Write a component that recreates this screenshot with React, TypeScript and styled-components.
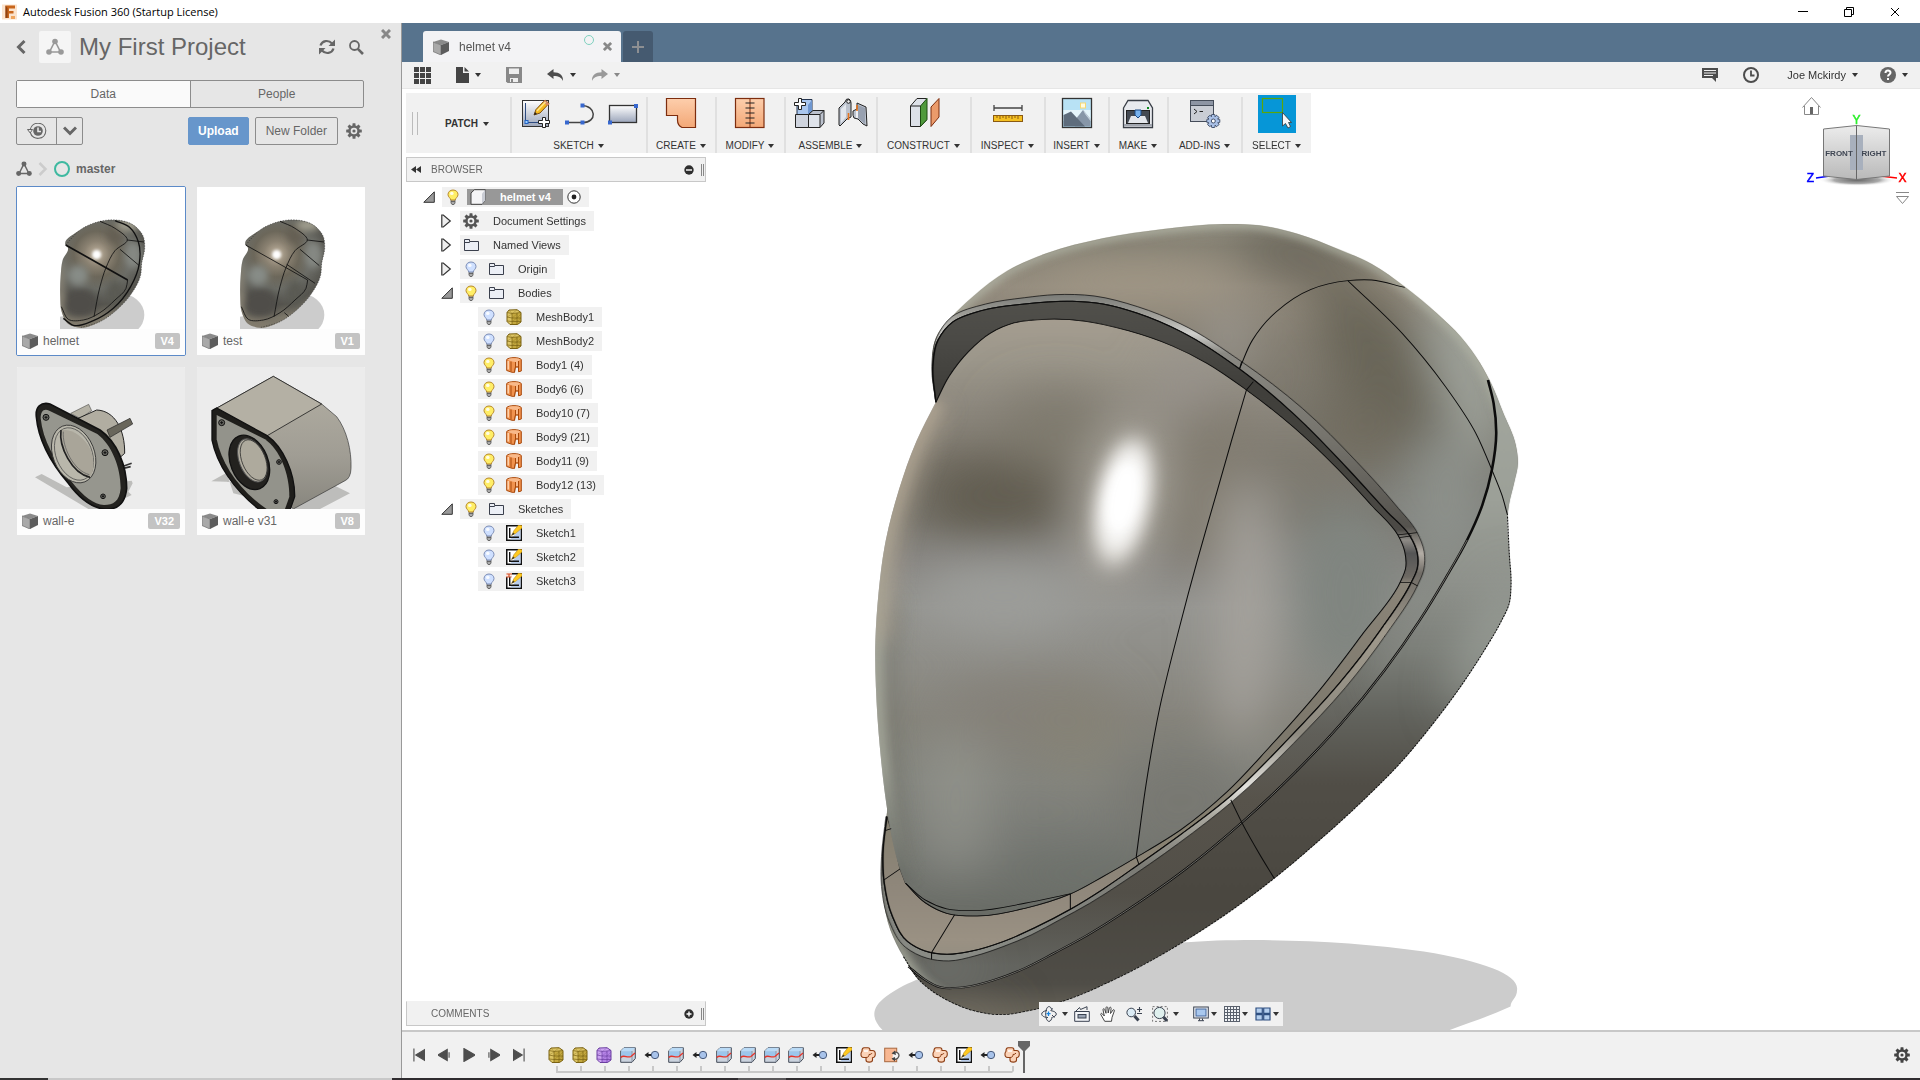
import React from "react";
import styled, { createGlobalStyle, css } from "styled-components";

const sans = `"Liberation Sans", Arial, sans-serif`;

const GlobalStyle = createGlobalStyle`
  *, *::before, *::after { box-sizing: border-box; }
  html, body { margin: 0; height: 100%; }
  body { font-family: ${sans}; font-size: 12px; color: #333; background: #fff; overflow: hidden; }
  button { font: inherit; color: inherit; background: none; border: 0; padding: 0; cursor: default; }
  ul, ol { list-style: none; margin: 0; padding: 0; }
  h1 { margin: 0; }
  svg { display: block; flex: none; }
`;

/* ---------- geometry helpers ---------- */

type Pt = [number, number];

const dist = (a: Pt, b: Pt) => Math.hypot(a[0] - b[0], a[1] - b[1]) || 1;

/* Smooth path through points; tangents are weighted by segment length. */
function curve(points: Pt[], closed = false, start = true): string {
  const n = points.length;
  const at = (i: number): Pt =>
    closed ? points[(i + n) % n] : points[Math.max(0, Math.min(n - 1, i))];
  const slope = (i: number): Pt => {
    const a = at(i - 1), b = at(i), c = at(i + 1);
    if (!closed && i === 0) return [(c[0] - b[0]) / dist(b, c), (c[1] - b[1]) / dist(b, c)];
    if (!closed && i === n - 1) return [(b[0] - a[0]) / dist(a, b), (b[1] - a[1]) / dist(a, b)];
    const u = dist(a, b), v = dist(b, c);
    return [0, 1].map((k) => (((b[k] - a[k]) / u) * v + ((c[k] - b[k]) / v) * u) / (u + v)) as Pt;
  };
  let d = start ? `M${points[0][0]} ${points[0][1]}` : "";
  const last = closed ? n : n - 1;
  for (let i = 0; i < last; i++) {
    const b = at(i), c = at(i + 1), s = slope(i), t = slope(closed ? (i + 1) % n : i + 1), l = dist(b, c) / 3;
    d += `C${(b[0] + s[0] * l).toFixed(1)} ${(b[1] + s[1] * l).toFixed(1)} ${(c[0] - t[0] * l).toFixed(1)} ${(c[1] - t[1] * l).toFixed(1)} ${c[0]} ${c[1]}`;
  }
  return closed ? d + "Z" : d;
}

function between(a: Pt[], b: Pt[]): string {
  const back = [...b].reverse();
  return curve(a) + `L${back[0][0]} ${back[0][1]}` + curve(back, false, false) + "Z";
}

/* ---------- shell ---------- */

const Window = styled.div`
  display: flex;
  flex-direction: column;
  height: 100vh;
  min-width: 1200px;
`;

const TitleBar = styled.header`
  display: flex;
  align-items: center;
  height: 23px;
  padding: 0 2px;
  background: #fff;
  color: #000;
  font-family: "Open Sans", "Noto Sans", sans-serif;
  font-size: 11px;
`;

const TitleText = styled.span`
  flex: 1;
  margin-left: 6px;
`;

const WindowButton = styled.button`
  display: grid;
  place-items: center;
  width: 46px;
  height: 23px;
`;

const Main = styled.div`
  display: flex;
  flex: 1;
  min-height: 0;
`;

const Taskbar = styled.footer`
  height: 2px;
  background: linear-gradient(to right, #333 48px, #c8c8c8 48px, #c8c8c8 392px, #2f2c2f 392px, #2f2c2f 738px, #5a585a 738px, #5a585a 786px, #2f2c2f 786px);
`;

/* ---------- data panel ---------- */

const Panel = styled.aside`
  display: flex;
  align-items: flex-start;
  width: 402px;
  padding: 0 0 0 16px;
  background: #e6e6e6;
  border-right: 1px solid #999;
  color: #666;
`;

const PanelBody = styled.div`
  width: 350px;
`;

const PanelClose = styled.button`
  margin: 6px 0 0 15px;
`;

const PanelHeader = styled.div`
  display: flex;
  align-items: center;
  width: 348px;
  margin-top: 8px;
`;

const ProjectBadge = styled.span`
  display: grid;
  place-items: center;
  width: 32px;
  height: 32px;
  margin: 0 8px 0 13px;
  border-radius: 2px;
  background: #f5f5f5;
`;

const ProjectTitle = styled.h1`
  flex: 1;
  font-size: 24px;
  font-weight: 400;
  line-height: 32px;
`;

const HeaderButton = styled.button`
  margin-left: 14px;
`;

const TabSwitch = styled.div`
  display: flex;
  width: 348px;
  height: 28px;
  margin-top: 17px;
  border: 1px solid #8c8c8c;
  border-radius: 2px;
`;

const SwitchTab = styled.button<{ $active?: boolean }>`
  flex: 1;
  background: ${(p) => (p.$active ? "#fafafa" : "transparent")};
  & + & { border-left: 1px solid #8c8c8c; }
`;

const Actions = styled.div`
  display: flex;
  align-items: center;
  width: 348px;
  height: 28px;
  margin-top: 9px;
`;

const SplitButton = styled.div`
  display: flex;
  height: 28px;
  margin-right: auto;
  border: 1px solid #8c8c8c;
  border-radius: 2px;
`;

const SplitPart = styled.button<{ $width: number }>`
  display: grid;
  place-items: center;
  width: ${(p) => p.$width}px;
  & + & { border-left: 1px solid #8c8c8c; }
`;

const PanelButton = styled.button<{ $primary?: boolean }>`
  height: 28px;
  padding: 0 10px;
  margin-right: 6px;
  border: 1px solid #8c8c8c;
  border-radius: 2px;
  ${(p) =>
    p.$primary &&
    css`
      padding: 0 9px;
      border-color: #6796cb;
      background: #6796cb;
      color: #fff;
      font-weight: 700;
    `}
`;

const SettingsButton = styled.button`
  margin: 0 2px 0 2px;
`;

const Breadcrumb = styled.nav`
  display: flex;
  align-items: center;
  gap: 6px;
  height: 16px;
  margin-top: 16px;
  font-weight: 700;
`;

const CardGrid = styled.ul`
  display: grid;
  grid-template-columns: 170px 170px;
  gap: 10px;
  margin-top: 9px;
`;

const Card = styled.li<{ $selected?: boolean }>`
  display: flex;
  flex-direction: column;
  height: 170px;
  border: 1px solid ${(p) => (p.$selected ? "#5c8ac8" : "transparent")};
  border-radius: 2px;
  background: #fff;
  background-clip: padding-box;
  overflow: hidden;
`;

const Thumb = styled.div<{ $tint: string }>`
  height: 142px;
  background: ${(p) => p.$tint};
  overflow: hidden;
`;

const CardFooter = styled.div`
  display: flex;
  align-items: center;
  flex: 1;
  padding: 0 5px 2px;
  background: #fdfdfd;
`;

const CardName = styled.span`
  flex: 1;
  margin-left: 5px;
`;

const Version = styled.span`
  padding: 0 6px;
  border-radius: 2px;
  background: #c3c3c3;
  color: #fff;
  font-size: 11px;
  font-weight: 700;
  line-height: 16px;
`;

/* ---------- workspace ---------- */

const Workspace = styled.section`
  display: flex;
  flex: 1;
  flex-direction: column;
  min-width: 0;
`;

const TabBar = styled.div`
  display: flex;
  align-items: flex-end;
  gap: 2px;
  height: 39px;
  padding-left: 21px;
  background: #57738d;
`;

const DocumentTab = styled.div`
  display: flex;
  align-items: center;
  width: 198px;
  height: 31px;
  padding: 0 9px 0 10px;
  border-radius: 3px 3px 0 0;
  background: #f3f3f5;
  color: #555;
`;

const DocumentName = styled.span`
  flex: 1;
  margin-left: 10px;
`;

const SyncMark = styled.span`
  align-self: flex-start;
  margin: 4px 9px 0 0;
`;

const NewTab = styled.button`
  display: grid;
  place-items: center;
  width: 30px;
  height: 31px;
  border-radius: 3px 3px 0 0;
  background: #455a70;
`;

const QuickBar = styled.div`
  display: flex;
  align-items: center;
  height: 27px;
  padding: 0 12px;
  background: #f1f1f1;
  border-bottom: 1px solid #e6e6e6;
  font-size: 11px;
`;

const QuickButton = styled.button<{ $gap?: number }>`
  display: flex;
  align-items: center;
  gap: 6px;
  margin-right: ${(p) => p.$gap ?? 0}px;
`;

const Spacer = styled.span`
  flex: 1;
`;

const CaretMark = styled.i<{ $faded?: boolean }>`
  width: 0;
  height: 0;
  border: 3px solid transparent;
  border-top: 4px solid ${(p) => (p.$faded ? "#888" : "#333")};
  border-bottom: 0;
`;

const Viewport = styled.div`
  position: relative;
  display: flex;
  flex: 1;
  flex-direction: column;
  align-items: flex-start;
  min-height: 0;
  padding: 4px;
`;

const ModelLayer = styled.div`
  position: absolute;
  inset: 0;
  z-index: -1;
  svg { width: 100%; height: 100%; }
`;

const CubeLayer = styled.div`
  position: absolute;
  top: 3px;
  right: 5px;
`;

const Ribbon = styled.div`
  display: flex;
  height: 60px;
  padding: 4px 0 0;
  background: #f1f1f1;
  font-size: 10px;
`;

const Grip = styled.i`
  width: 6px;
  height: 23px;
  margin: 0 27px 0 6px;
  border: solid #bbb;
  border-width: 0 1px;
`;

const WorkspacePicker = styled.button`
  display: flex;
  align-items: center;
  width: 104px;
  padding-bottom: 3px;
  font-weight: 700;
`;

const RibbonGroup = styled.div<{ $width: number }>`
  display: flex;
  flex-direction: column;
  align-items: center;
  justify-content: space-between;
  width: ${(p) => p.$width}px;
  padding-right: 1px;
  border-left: 2px solid #e0e0e0;
`;

const RibbonIcons = styled.div`
  display: flex;
  gap: 12px;
  height: 32px;
`;

const RibbonTool = styled.button<{ $active?: boolean }>`
  display: grid;
  place-items: center;
  width: ${(p) => (p.$active ? 38 : 32)}px;
  height: ${(p) => (p.$active ? 38 : 32)}px;
  margin-top: ${(p) => (p.$active ? -2 : 0)}px;
  background: ${(p) => (p.$active ? "#0696d7" : "transparent")};
`;

const MenuLabel = styled.button`
  display: flex;
  align-items: center;
  gap: 4px;
  line-height: 14px;
`;

const MenuText = styled.span<{ $space?: number }>`
  margin-right: ${(p) => p.$space ?? 0}px;
`;

const PaletteBar = styled.div<{ $indent?: boolean }>`
  display: flex;
  align-items: center;
  width: 300px;
  height: 25px;
  padding: 0 1px 0 ${(p) => (p.$indent ? 24 : 4)}px;
  border: 1px solid #c8c8c8;
  background: #f1f1f1;
  color: #666;
  font-size: 10px;
`;

const BrowserBar = styled(PaletteBar)`
  margin-top: 4px;
`;

const CommentsBar = styled(PaletteBar)`
  border-top-color: #f1f1f1;
`;

const PaletteTitle = styled.span`
  flex: 1;
`;

const PaletteEdge = styled.i`
  width: 3px;
  height: 12px;
  margin-left: 7px;
  border: solid #888;
  border-width: 0 1px;
`;

const CollapseButton = styled.button`
  margin-right: 10px;
`;

const Tree = styled.ul`
  flex: 1;
  padding: 5px 0 0 14px;
  font-size: 11px;
`;

const TreeRow = styled.li<{ $level: number }>`
  display: flex;
  align-items: center;
  height: 20px;
  margin-bottom: 4px;
  padding-left: ${(p) => p.$level * 18}px;
`;

const TreeToggle = styled.button`
  width: 22px;
  padding-left: 3px;
`;

const NodeChip = styled.div`
  display: flex;
  align-items: center;
  height: 20px;
  padding: 0 8px 0 3px;
  background: #f1f1f1;
`;

const BulbSlot = styled.button<{ $root?: boolean }>`
  display: grid;
  place-items: center;
  width: 15px;
  margin-right: ${(p) => (p.$root ? 7 : 10)}px;
`;

const NodeText = styled.span`
  margin-left: 14px;
`;

const RootName = styled.span`
  display: flex;
  align-items: center;
  height: 16px;
  margin-right: 4px;
  padding: 0 12px 0 3px;
  background: #989898;
  color: #fff;
  font-weight: 700;
`;

const ViewportBottom = styled.div`
  display: grid;
  grid-template-columns: 1fr auto 1fr;
  align-items: center;
  width: 100%;
`;

const NavBar = styled.div`
  display: flex;
  align-items: center;
  height: 24px;
  padding: 0 4px 0 2px;
  background: #f1f1f1;
`;

const NavTool = styled.button<{ $gap: number; $inner?: number }>`
  display: flex;
  align-items: center;
  gap: ${(p) => p.$inner ?? 2}px;
  margin-right: ${(p) => p.$gap}px;
`;

const Timeline = styled.div`
  display: flex;
  height: 48px;
  padding: 0 10px 0 11px;
  border-top: 2px solid #c8c8c8;
  background: #f1f1f1;
`;

const Playback = styled.div`
  display: flex;
  align-items: center;
  gap: 13px;
  width: 131px;
`;

const Feature = styled.li`
  width: 24px;
  padding-top: 15px;
`;

const FeatureButton = styled.button`
  display: grid;
  place-items: center;
  width: 24px;
  height: 16px;
`;

const Features = styled.ol`
  display: flex;
  margin-right: -6px;
`;

const TickLeft = styled.i`
  display: block;
  height: 7px;
  border: solid #c8c8c8;
  border-width: 0 0 2px;
`;

const TickRight = styled(TickLeft)`
  border-width: 0 0 2px 2px;
`;

const TickRow = styled.div`
  display: grid;
  grid-template-columns: 12px 12px;
  height: 7px;
  margin-top: 3px;
  ${Feature}:first-child & ${TickLeft}:first-child { border-color: transparent; }
  ${Feature}:last-child & ${TickRight} { border-bottom-color: transparent; }
`;

const TimelineEnd = styled.div`
  flex: 1;
  padding-top: 9px;
`;

const TimelineSettings = styled.button`
  align-self: center;
`;

/* ---------- icons ---------- */

const Caret = ({ faded }: { faded?: boolean }) => <CaretMark $faded={faded} />;

const Gear = ({ size = 16, color = "#666", hole = "#e6e6e6" }) => (
  <svg width={size} height={size} viewBox="0 0 16 16">
    <g fill={color}>
      {[0, 45, 90, 135].map((a) => (
        <rect key={a} x="6.5" y="0.2" width="3" height="15.6" rx="0.5" transform={`rotate(${a} 8 8)`} />
      ))}
      <circle cx="8" cy="8" r="5.8" />
    </g>
    <circle cx="8" cy="8" r="3.3" fill={hole} />
    <circle cx="8" cy="8" r="1.6" fill={color} />
  </svg>
);

const Cross = ({ size = 10, color = "#888", width = 3 }) => (
  <svg width={size} height={size} viewBox="0 0 10 10">
    <path d="M1 1L9 9M9 1L1 9" stroke={color} strokeWidth={width} />
  </svg>
);

const ProjectIcon = ({ size = 18, color = "#999" }) => (
  <svg width={size} height={size} viewBox="0 0 18 18">
    <path d="M9 3L3.5 14H14.5Z" fill="none" stroke={color} strokeWidth="1.6" />
    <g fill={color}>
      <circle cx="9" cy="3.5" r="2.8" />
      <circle cx="3" cy="14" r="2.8" />
      <circle cx="15" cy="14" r="2.8" />
    </g>
  </svg>
);

const Cube = () => (
  <svg width="16" height="16" viewBox="0 0 16 16">
    <path d="M0 3L8 0.5L16 3L8 6Z" fill="#8a8a8a" />
    <path d="M0 3L8 6V16L0 12.5Z" fill="#a9a9a9" stroke="#777" strokeWidth="0.8" />
    <path d="M8 6L16 3V12L8 16Z" fill="#5c5c5c" />
  </svg>
);

const Ring = ({ size = 16, color = "#3eb9a0", width = 2 }) => (
  <svg width={size} height={size} viewBox={`0 0 ${size} ${size}`}>
    <circle cx={size / 2} cy={size / 2} r={size / 2 - width / 2} fill="none" stroke={color} strokeWidth={width} />
  </svg>
);

const Bulb = ({ on }: { on?: boolean }) => (
  <svg width="12" height="16" viewBox="0 0 12 16">
    <path d="M4 10.5L4 14L5 15.5H7L8 14V10.5Z" fill="#aaa" stroke="#555" strokeWidth="0.8" />
    <path d="M4 12.5H8" stroke="#555" strokeWidth="0.8" />
    <path
      d="M6 1C3 1 1 3 1 5.6C1 8 3.4 8.8 3.8 11H8.2C8.6 8.8 11 8 11 5.6C11 3 9 1 6 1Z"
      fill={on ? "#ffee66" : "#cfe0ff"}
      stroke={on ? "#b8892b" : "#7c8db5"}
    />
    <ellipse cx="4.8" cy="4.4" rx="1.8" ry="1.6" fill="#fff" opacity="0.85" />
  </svg>
);

const Folder = () => (
  <svg width="16" height="16" viewBox="0 0 16 16">
    <path d="M1.5 13.5V2.5H6.5V4.5H15.5V13.5Z" fill="#eceff6" stroke="#3a3f4c" strokeLinejoin="round" />
    <path d="M2 5.5H6.5L7.5 4.5" stroke="#3a3f4c" fill="none" />
  </svg>
);

const DocCube = () => (
  <svg width="16" height="16" viewBox="0 0 16 16">
    <path d="M1 4L4.5 0.7H15.3V11.5L12 15.3H1Z" fill="#f4f4f6" stroke="#444" />
    <path d="M12 15V4.5L15.3 1V11.5Z" fill="#c9ccd4" />
  </svg>
);

const Mesh = ({ purple }: { purple?: boolean }) => {
  const line = purple ? "#6b3fa0" : "#7a6213";
  const fill = purple ? "#cda4f2" : "#dcc464";
  return (
    <svg width="16" height="16" viewBox="0 0 16 16">
      <path d="M3 1L11 0.7L15 3.5V13L11.5 15.5H4L1 12.5V3.5Z" fill={fill} />
      <path d="M6 4.5L15 3.5V13L11.5 15.5H6Z" fill={purple ? "#b583e6" : "#c4a83e"} />
      <path
        d="M1 3.5L6 4.5L15 3.5M6 4.5V15.5M11 4V15.5M1 8L6 9H15M1 12L6 12.5H15"
        fill="none"
        stroke={line}
        strokeWidth="0.7"
      />
      <path d="M1 8L6 5M6 9L11 5M11 9L15 5M6 12.5L11 9M11 12.5L15 9M3 1L6 4.5L11 1" fill="none" stroke={line} strokeWidth="0.5" opacity="0.6" />
      <path d="M3 1L11 0.7L15 3.5V13L11.5 15.5H4L1 12.5V3.5Z" fill="none" stroke={line} />
    </svg>
  );
};

const Surface = () => (
  <svg width="16" height="16" viewBox="0 0 16 16">
    <path d="M0.7 2.5C3 0 13 0 15.3 2.5V14L12.5 14.8V10H9.5L8.5 15.3H6L0.7 13.5Z" fill="#f0934f" stroke="#a9480a" />
    <path d="M1.5 2.7C4 0.8 12 0.8 14.5 2.7L12.5 4V9.5H9.5V5L6 4.5Z" fill="#f8b98a" />
    <path d="M9.5 10.5H12.5V15.5H9Z" fill="#f1f1f1" />
    <path d="M5 4.5V14.5M9.5 5V10H12.5V4M12.5 10V14.8M9.5 10L8.5 15.3" fill="none" stroke="#a9480a" />
    <path d="M2.2 4V12.5" stroke="#ffd7b5" strokeWidth="1.4" />
  </svg>
);

const SketchIcon = ({ pinned }: { pinned?: boolean }) => (
  <svg width="16" height="16" viewBox="0 0 16 16">
    <rect x="0.75" y="0.75" width="14.5" height="14.5" fill="#fff" stroke="#111" strokeWidth="1.5" />
    <path d="M14.5 4V14.5H4Z" fill="#b9cdec" />
    <path d="M3.7 3V12.3H13" fill="none" stroke="#111" strokeWidth="1.4" />
    <path d="M5.5 10.5L8 5.5L12.5 0L16 0.5V3L9.5 8.5Z" fill="#ffc91f" stroke="#a07614" strokeWidth="0.5" />
    <path d="M5.5 10.5L7.2 7.5L8.7 8.9Z" fill="#333" />
    {pinned && <path d="M0 0H6V4H0Z" fill="#fbe8e0" />}
    {pinned && <path d="M0.5 1H6M3 1V3.5M0 4H5.5" stroke="#d4502a" strokeWidth="1.2" />}
  </svg>
);

const BoxSplit = () => (
  <svg width="16" height="16" viewBox="0 0 16 16">
    <path d="M0.7 4L4 0.7H15.3V11.5L12 15.3H0.7Z" fill="#cbd3de" stroke="#444c59" />
    <path d="M0.7 4L4 0.7H15.3L12 4Z" fill="#b9daf6" />
    <path d="M1.2 4.3H11.7V9L1.2 10Z" fill="#9cc6ec" />
    <path d="M12 4V15" stroke="#7c8696" strokeWidth="0.8" />
    <path d="M0.7 10.5C4 7 7 11.5 11 9.5L15 6" fill="none" stroke="#e5342a" strokeWidth="1.3" />
  </svg>
);

const MoveIcon = () => (
  <svg width="16" height="16" viewBox="0 0 16 16">
    <circle cx="11" cy="8" r="3.7" fill="#a8c3ea" stroke="#47597a" />
    <path d="M0.5 8L4.5 5V7H7V9H4.5V11Z" fill="#222" />
  </svg>
);

const PatchBlob = () => (
  <svg width="16" height="16" viewBox="0 0 16 16">
    <path d="M4 0.8H8C9.5 0.8 10 2 10 3.5H12.5C14.8 3.5 15.3 5 15.3 7C15.3 9.5 14.8 10.5 12.5 10.7V13C12.5 15.8 6 15.8 6 13V10.5H4C1.5 10.5 0.8 9 1 6.5C1.2 5 2 5 2 4C2 2 2.3 0.8 4 0.8Z" fill="#fbd3b8" stroke="#8d3e14" strokeWidth="1.1" />
    <path d="M6 10.5C8 10.5 9 9.5 9 7.5C10.5 7.5 11.5 7 12 6" fill="none" stroke="#8d3e14" />
    <path d="M4 4H8" stroke="#fff" strokeWidth="1.5" />
  </svg>
);

const PatchTurn = () => (
  <svg width="16" height="16" viewBox="0 0 16 16">
    <rect x="0.7" y="1.2" width="12" height="13.5" fill="#f8b791" stroke="#a9683f" />
    <path d="M9 6C13 3.5 16 7 14.5 10C13.5 12.5 10 13 8.5 11.5" fill="#f1f1f1" stroke="#555" strokeWidth="1.3" />
    <path d="M11 3.5L7.5 6.5L12 8ZM11 10L7.5 11.5L11 14.5Z" fill="#444" />
  </svg>
);

const Expander = ({ open }: { open?: boolean }) =>
  open ? (
    <svg width="12" height="12" viewBox="0 0 12 12">
      <path d="M0.8 11.3H11.3V0.8Z" fill="#999" stroke="#333" />
    </svg>
  ) : (
    <svg width="12" height="14" viewBox="0 0 12 14">
      <path d="M0.8 1H2.3L9.3 7L2.3 13H0.8Z" fill="#eee" stroke="#333" strokeWidth="1.2" />
    </svg>
  );

const RoundSign = ({ plus }: { plus?: boolean }) => (
  <svg width="10" height="10" viewBox="0 0 10 10">
    <circle cx="5" cy="5" r="4.7" fill="#2e2e2e" />
    <path d={plus ? "M2.5 5H7.5M5 2.5V7.5" : "M2 5H8"} stroke="#fff" strokeWidth="1.4" />
  </svg>
);

const metal = (
  <linearGradient id="steel" x1="0" y1="0" x2="0" y2="1">
    <stop offset="0" stopColor="#fff" />
    <stop offset="1" stopColor="#9ba5ba" />
  </linearGradient>
);

const Tool = ({ children }: { children: React.ReactNode }) => (
  <svg width="32" height="32" viewBox="0 0 32 32" fill="none">
    {children}
  </svg>
);

const ribbonIcons: Record<string, React.ReactNode> = {
  newSketch: (
    <Tool>
      <defs>{metal}</defs>
      <rect x="3.5" y="3.5" width="26" height="26" fill="url(#steel)" stroke="#333" />
      <path d="M6.5 6V25.5H23" stroke="#2c4a80" />
      <rect x="6" y="23.5" width="3" height="3" fill="#9ad0ff" stroke="#1f61c4" />
      <path d="M15 18L17 12.5L26 3L30 6.5L21 16Z" fill="#f6b91e" stroke="#7c4d10" />
      <path d="M25 4L29.5 8" stroke="#d28b6a" strokeWidth="3" />
      <path d="M18 14L26.5 5" stroke="#ffe68a" strokeWidth="1.5" />
      <path d="M15 18L16 15L18 17Z" fill="#222" />
      <path d="M23.5 20.5H26.5V23.5H30.5V26.5H26.5V30.5H23.5V26.5H19.5V23.5H23.5Z" fill="#fff" stroke="#222" />
    </Tool>
  ),
  line: (
    <Tool>
      <path d="M3.500 25.5H20C34 25.5 34 8.5 18 8.5" stroke="#444" strokeWidth="1.5" />
      <g fill="#3868cf">
        <rect x="2" y="23.5" width="4" height="4" />
        <rect x="17.500" y="23.5" width="4" height="4" />
        <rect x="17.500" y="6.5" width="4" height="4" />
      </g>
    </Tool>
  ),
  rect: (
    <Tool>
      <rect x="2.5" y="8.5" width="27" height="17" fill="url(#steel)" stroke="#333" strokeWidth="1.3" />
      <rect x="1" y="23.5" width="4" height="4" fill="#3868cf" />
      <rect x="27" y="7" width="4" height="4" fill="#3868cf" />
    </Tool>
  ),
  patch: (
    <Tool>
      <defs>
        <linearGradient id="orange" x1="0" y1="0" x2="0" y2="1">
          <stop offset="0" stopColor="#fdceac" />
          <stop offset="1" stopColor="#f3a877" />
        </linearGradient>
      </defs>
      <path d="M1.5 1.5H30.5V30.5H17Q12.5 28.5 12.5 23V18.5H1.5Z" fill="url(#orange)" stroke="#7d2d0e" strokeWidth="1.2" />
    </Tool>
  ),
  stitch: (
    <Tool>
      <rect x="1.5" y="1.5" width="28.5" height="29" fill="url(#orange)" stroke="#7d2d0e" strokeWidth="1.2" />
      <path d="M16 2V30" stroke="#7d2d0e" />
      <path d="M11.5 6H20.5M11.5 11H20.5M11.5 16H20.5M11.5 21H20.5M11.5 26H20.5" stroke="#222" strokeWidth="1.2" />
    </Tool>
  ),
  component: (
    <Tool>
      <path d="M4 8L9 2.5H19V14L15 18H4Z" fill="#a9c6ee" stroke="#24344f" />
      <path d="M15 8L19 3V14L15 18Z" fill="#6f97d0" />
      <path d="M2.5 17.5H15.5V30.5H2.5Z" fill="#cfd4de" stroke="#222" />
      <path d="M15.5 17.5L20 13.5H31V26L27 30.5H15.5Z" fill="#bcc2ce" stroke="#222" />
      <path d="M15.5 17.5H27V30.5H15.5ZM27 17.5L31 13.5" fill="#dfe3ea" stroke="#222" />
      <path d="M5.5 1.5H8.5V5.5H12.5V8.5H8.5V12.5H5.5V8.5H1.5V5.5H5.5Z" fill="#fff" stroke="#222" />
    </Tool>
  ),
  joint: (
    <Tool>
      <path d="M2 11L8 5Q9 1 12 2Q14 3 14 6V20L10 22L3 29L2 28Z" fill="#bcc3ce" stroke="#222" />
      <path d="M4 12L9 7V20L4 26Z" fill="#e3e7ed" />
      <path d="M20 6L29 10L30 29L26 27L21 22L17 21Q15.5 19 16 14L20 12Z" fill="#bcc3ce" stroke="#222" />
      <path d="M21 8L21 21L28 27V11Z" fill="#98a1b0" />
      <path d="M20 13V21" stroke="#eef0f4" strokeWidth="2" />
      <circle cx="11.5" cy="4.5" r="1.8" fill="#eee" stroke="#222" />
      <path d="M11.5 16V23M20 8V14" stroke="#e8741c" strokeWidth="1.6" />
    </Tool>
  ),
  plane: (
    <Tool>
      <path d="M2.5 9L9 1.5H18.5V23L12.5 29.5H2.5Z" fill="#dde1e8" stroke="#222" />
      <path d="M12.5 9L19 1.5V22.5L12.5 29.5Z" fill="#4f9a3c" stroke="#1d4d12" />
      <path d="M2.5 9H12.5" stroke="#222" />
      <path d="M23 10L31 1.5V20L23 29.5Z" fill="#eb9b6b" stroke="#7d2d0e" />
    </Tool>
  ),
  measure: (
    <Tool>
      <path d="M2 11H30M2 8V14M30 8V14" stroke="#444" strokeWidth="1.3" />
      <rect x="1.5" y="18.5" width="29" height="6" fill="#f4c022" stroke="#8b5a12" />
      <path d="M5 19V21M8 19V22M11 19V21M14 19V22M17 19V21M20 19V22M23 19V21M26 19V22" stroke="#8b5a12" />
    </Tool>
  ),
  picture: (
    <Tool>
      <rect x="1.5" y="1.5" width="29" height="29" fill="#b8e2f5" stroke="#333" strokeWidth="1.3" />
      <path d="M2.5 13H29.5V24H2.5Z" fill="#e4f4fb" />
      <rect x="19.5" y="6" width="5" height="5" fill="#fffbe0" stroke="#f6d873" />
      <path d="M14 23L22 13L29.5 22V29.5H14Z" fill="#8796a8" />
      <path d="M2.5 18L10 14.5L24 29.5H2.5Z" fill="#5e6c7c" />
      <path d="M22 13L24 17L29.5 24V22Z" fill="#c7d3df" />
    </Tool>
  ),
  printer: (
    <Tool>
      <path d="M1.5 11L6 3.5H26L30.5 11V30.5H1.5Z" fill="#e8eaee" stroke="#3a3f47" strokeWidth="1.3" />
      <rect x="4.5" y="13.5" width="23" height="13" fill="#444a53" stroke="#222" />
      <path d="M9 19H23L26 26H6Z" fill="#e4e7ec" />
      <path d="M13 13H19V18L16 21L13 18Z" fill="#79b3ef" stroke="#1c4a86" />
      <path d="M2 28H30" stroke="#a1a6af" strokeWidth="2" />
      <rect x="25" y="10" width="2" height="2" fill="#0a8a1c" />
    </Tool>
  ),
  script: (
    <Tool>
      <rect x="1.5" y="3.5" width="23" height="21" fill="#c9cdd5" stroke="#444c59" />
      <path d="M2 4H24V8H2Z" fill="#8d95a4" />
      <path d="M2 8.5H24" stroke="#444c59" />
      <path d="M5 12L8 14.5L5 17M10.5 14.5H14" stroke="#222" />
      <g fill="#a9c0e6" stroke="#36435e" strokeWidth="0.9">
        {[0, 45, 90, 135].map((a) => (
          <rect key={a} x="22.5" y="17.5" width="3.5" height="13" rx="0.6" transform={`rotate(${a} 24.3 24)`} />
        ))}
        <circle cx="24.3" cy="24" r="4.6" stroke="none" />
        <circle cx="24.3" cy="24" r="2" fill="#fff" />
      </g>
    </Tool>
  ),
  select: (
    <svg width="38" height="38" viewBox="0 0 38 38">
      <rect x="4.5" y="3.5" width="20" height="14" fill="none" stroke="#5aa60a" strokeWidth="1.2" />
      <path d="M24.5 17.5V31L27.5 28.5L30 33L32.5 31.5L30.5 27.5H33.5Z" fill="#f5f7fa" stroke="#333" strokeWidth="0.8" />
    </svg>
  ),
};

const navIcons: Record<string, React.ReactNode> = {
  orbit: (
    <svg width="16" height="16" viewBox="0 0 16 16" fill="none" stroke="#3a4250">
      <path d="M6 4.5C2.5 5 0.7 6.5 0.7 8C0.7 10 3.5 11.5 7 11.5M10 4.7C13 5 15.3 6.5 15.3 8C15.3 9.5 13.5 10.7 11.5 11.2" />
      <path d="M10.5 3C10 1.5 9 0.6 8 0.6C6 0.6 4.7 4 4.7 8C4.7 12 6 15.4 8 15.4C9.5 15.4 10.7 13.5 11.1 11" />
      <path d="M7.5 5.5V10M5.5 7.7H9.5" stroke="#1683e0" strokeWidth="1.3" />
      <path d="M9.5 4.5L12 2.5M11 9L13.5 11.5" />
    </svg>
  ),
  look: (
    <svg width="16" height="16" viewBox="0 0 16 16" fill="none" stroke="#3a4250">
      <path d="M0.7 5.5H15.3V15.3H0.7Z" fill="#f4f6f9" />
      <rect x="4" y="8.5" width="8" height="3.5" fill="#9aa4b4" />
      <path d="M2 5L5.5 1.5L6.5 3.5L13 0.7" />
      <path d="M13 0.7V4" />
    </svg>
  ),
  hand: (
    <svg width="16" height="16" viewBox="0 0 16 16">
      <path d="M4.7 15.3L0.8 8.5C0.5 7.3 1.8 7 2.5 8L4.3 10L3 3.8C2.9 2.5 4.3 2.3 4.7 3.5L6 7.3L6 1.7C6.1 0.5 7.6 0.5 7.8 1.7L8.2 7L9.4 1.9C9.8 0.8 11.2 1 11.1 2.3L10.5 7.5L13 4C13.7 3.2 14.8 4 14.3 5L12 11.5L11.5 15.3Z" fill="#fff" stroke="#333" strokeWidth="0.9" />
    </svg>
  ),
  zoom: (
    <svg width="16" height="16" viewBox="0 0 16 16" fill="none" stroke="#3a4250">
      <circle cx="5.2" cy="6.5" r="4.3" fill="#dcecf6" />
      <path d="M8.5 10L12.5 14.5" strokeWidth="3" />
      <path d="M11 3.5H16M13.5 1V6M11 7.5H16" strokeWidth="1.1" />
    </svg>
  ),
  zoomWindow: (
    <svg width="16" height="16" viewBox="0 0 16 16" fill="none" stroke="#3a4250">
      <rect x="0.6" y="0.6" width="14.8" height="14.8" strokeDasharray="2 2" stroke="#777" />
      <circle cx="7.5" cy="7" r="5.6" fill="#dff0ee" />
      <path d="M11.5 11L15 15" strokeWidth="3" />
    </svg>
  ),
  display: (
    <svg width="16" height="16" viewBox="0 0 16 16" fill="none" stroke="#3a4250">
      <rect x="0.7" y="1" width="14.6" height="11" fill="#eef1f5" />
      <rect x="3" y="3" width="10" height="7" fill="#a9c8ee" stroke="#44679c" />
      <path d="M5 14.7H11M6.5 12.5V14.5M9.5 12.5V14.5" />
    </svg>
  ),
  grid: (
    <svg width="16" height="16" viewBox="0 0 16 16" fill="none" stroke="#5a616d">
      <rect x="0.5" y="0.5" width="15" height="15" fill="#f0f2f5" />
      <path d="M3.5 0.5V15.5M6.5 0.5V15.5M9.5 0.5V15.5M12.5 0.5V15.5M0.5 3.5H15.5M0.5 6.5H15.5M0.5 9.5H15.5M0.5 12.5H15.5" />
    </svg>
  ),
  panes: (
    <svg width="16" height="16" viewBox="0 0 16 16" fill="#b5cfee" stroke="#2f4f80" strokeWidth="1.2">
      <path d="M1 2H7.3V7.3H1ZM8.7 2H15V7.3H8.7ZM1 8.7H7.3V14H1ZM8.7 8.7H15V14H8.7Z" />
    </svg>
  ),
};

/* ---------- model ---------- */

const silhouette: Pt[] = [
  [175, 607], [166, 510], [180, 400], [212, 350], [260, 290], [340, 212], [430, 160], [560, 115], [700, 87], [840, 72],
  [920, 76], [1010, 102], [1100, 146], [1180, 192], [1256, 260], [1330, 340], [1385, 410], [1430, 490], [1455, 550],
  [1482, 635], [1512, 735], [1517, 790], [1508, 850], [1497, 910], [1493, 950], [1497, 1060], [1501, 1160], [1497, 1210],
  [1478, 1265], [1440, 1350], [1390, 1450], [1320, 1573], [1245, 1690], [1165, 1795], [1060, 1920], [955, 2035], [850, 2137],
  [750, 2222], [600, 2330], [465, 2405], [390, 2432], [325, 2444], [270, 2435], [200, 2400], [140, 2345], [100, 2270],
  [70, 2190], [53, 2090], [50, 1980], [62, 1840], [90, 1500], [130, 900],
];
const visorTop: Pt[] = [
  [175, 607], [205, 530], [250, 455], [300, 400], [355, 369], [430, 358], [520, 364], [620, 393], [720, 438], [800, 490],
  [891, 570], [1000, 682], [1100, 805], [1180, 917], [1240, 1005], [1256, 1055], [1258, 1105], [1245, 1148], [1160, 1300],
  [1060, 1470], [945, 1640], [845, 1777], [740, 1889], [637, 1972], [560, 2030], [485, 2082], [380, 2125], [270, 2148],
  [200, 2140], [150, 2108], [105, 2050],
];
const visorLeft: Pt[] = [
  [105, 2050], [92, 2005], [75, 1920], [62, 1820], [46, 1640], [37, 1460], [36, 1320], [43, 1180], [60, 1020], [90, 870],
  [130, 725], [175, 607],
];
const rimInner: Pt[] = [
  [175, 607], [168, 500], [180, 420], [215, 365], [280, 332], [380, 312], [490, 304], [560, 312], [640, 340], [740, 395],
  [875, 507], [1000, 642], [1120, 800], [1215, 935], [1268, 1008], [1285, 1060], [1285, 1105], [1270, 1150], [1200, 1290],
  [1105, 1450], [985, 1620], [850, 1793], [740, 1903], [643, 1993], [560, 2068], [485, 2128], [405, 2182], [330, 2225],
  [255, 2254], [200, 2263], [150, 2253], [110, 2225], [75, 2150], [56, 2050], [53, 1960], [62, 1850],
];
const rimOuter: Pt[] = [
  [175, 607], [166, 500], [178, 410], [212, 350], [290, 312], [380, 293], [450, 284], [540, 288], [640, 320], [740, 372],
  [880, 485], [1020, 625], [1145, 785], [1235, 915], [1285, 998], [1301, 1055], [1300, 1110], [1285, 1158], [1215, 1300],
  [1120, 1462], [1000, 1630], [860, 1803], [735, 1930], [600, 2052], [530, 2110], [460, 2160], [395, 2205], [330, 2240],
  [265, 2268], [205, 2283], [155, 2275], [105, 2242], [68, 2165], [50, 2060], [50, 1970], [60, 1850],
];
const seam: Pt[] = [
  [1448, 540], [1461, 610], [1467, 700], [1457, 810], [1435, 915], [1400, 1020], [1350, 1135], [1290, 1262], [1210, 1410],
  [1110, 1570], [1005, 1715], [880, 1868], [750, 2008], [605, 2140], [525, 2205], [450, 2258], [380, 2305], [310, 2340],
  [240, 2362], [185, 2362], [145, 2335], [112, 2300],
];

const visorPath = curve(visorTop) + curve(visorLeft, false, false) + "Z";
const outerFace = curve(seam) + "L60 2300V2500L1600 2500L1600 500Z";

const Blob = ({ x, y, rx, ry, c, o = 1, r = 0 }: { x: number; y: number; rx: number; ry: number; c: string; o?: number; r?: number }) => (
  <ellipse cx={x} cy={y} rx={rx} ry={ry} fill={c} opacity={o} transform={r ? `rotate(${r} ${x} ${y})` : undefined} />
);

const Vertical = ({ id, y1, y2, stops }: { id: string; y1: number; y2: number; stops: [number, string][] }) => (
  <linearGradient id={id} gradientUnits="userSpaceOnUse" x1="0" x2="0" y1={y1} y2={y2}>
    {stops.map(([y, c]) => (
      <stop key={y} offset={(y - y1) / (y2 - y1)} stopColor={c} />
    ))}
  </linearGradient>
);

const HelmetModel = () => (
  <svg viewBox="402 89 1518 941" preserveAspectRatio="xMidYMax meet" role="img" aria-label="Helmet model">
    <defs>
      <Vertical id="visorFill" y1={350} y2={2150} stops={[[350, "#a59d90"], [480, "#9c978b"], [620, "#8d887e"], [800, "#7e796f"], [950, "#7b7870"], [1080, "#888682"], [1220, "#959591"], [1400, "#8e8d87"], [1560, "#86847c"], [1750, "#83847e"], [1950, "#777974"], [2150, "#686b65"]]} />
      <Vertical id="shellFill" y1={70} y2={2300} stops={[[70, "#8f8c7f"], [140, "#827e71"], [260, "#958d7f"], [420, "#857f73"], [700, "#77746a"], [950, "#828480"], [1200, "#858883"], [1400, "#73756f"], [1600, "#605f59"], [1800, "#57534b"], [2080, "#524f48"], [2200, "#5a5953"], [2300, "#63645f"]]} />
      <Vertical id="outerFill" y1={540} y2={2450} stops={[[540, "#a3a79e"], [900, "#9ca098"], [1150, "#8e918b"], [1350, "#7c7f79"], [1550, "#62635d"], [1750, "#514e47"], [2100, "#4a4740"], [2350, "#4f4d47"], [2450, "#6a665b"]]} />
      <Vertical id="ledgeFill" y1={300} y2={2260} stops={[[300, "#51504b"], [420, "#4b4a46"], [560, "#403f3b"], [800, "#45443f"], [990, "#4c4a46"], [1020, "#8e8b86"], [1060, "#555"], [1130, "#6d6963"], [1150, "#8a8478"], [1600, "#7d786c"], [1900, "#878171"], [2060, "#8f877b"], [2220, "#9a9183"], [2260, "#968f82"]]} />
      <Vertical id="beadFill" y1={284} y2={2280} stops={[[284, "#7b7c78"], [350, "#a3a29c"], [400, "#cfcfcc"], [460, "#8a8983"], [700, "#77756e"], [980, "#55534e"], [1060, "#b4aea6"], [1120, "#706c66"], [1300, "#9f998c"], [1600, "#8e8a80"], [1760, "#e2e1dc"], [1850, "#a9a79e"], [2000, "#7b7b75"], [2280, "#8a8c86"]]} />
      <Vertical id="edgeFill" y1={600} y2={2050} stops={[[600, "#aca191"], [900, "#a8a090"], [1200, "#a5a799"], [1700, "#a2a598"], [1850, "#85887f"], [2050, "#686b65"]]} />
      <filter id="soft" x="-60%" y="-60%" width="220%" height="220%"><feGaussianBlur stdDeviation="12" /></filter>
      <filter id="glow" x="-100%" y="-60%" width="300%" height="220%"><feGaussianBlur stdDeviation="22 34" /></filter>
      <filter id="softer" filterUnits="userSpaceOnUse" x="-200" y="-200" width="2000" height="2900"><feGaussianBlur stdDeviation="54 70" /></filter>
      <clipPath id="shellClip"><path d={curve(silhouette, true)} /></clipPath>
      <clipPath id="visorClip"><path d={visorPath} /></clipPath>
      <clipPath id="outerClip"><path d={outerFace} /></clipPath>
    </defs>
    <g transform="translate(860 200) scale(.4337 .3333)">
      <path fill="#ccc" d="M60 2500C24 2460 24 2425 60 2390C90 2362 110 2350 140 2335L745 2228C900 2212 1130 2222 1300 2255C1440 2285 1520 2325 1515 2370C1515 2395 1500 2400 1500 2420C1450 2450 1400 2470 1340 2500Z" />

      <g clipPath="url(#shellClip)">
        <rect x="0" y="0" width="1600" height="2500" fill="url(#shellFill)" />
        <g filter="url(#softer)">
          <Blob x={640} y={240} rx={240} ry={60} c="#a39987" />
          <Blob x={1010} y={170} rx={150} ry={80} c="#6c675b" r={30} o={0.9} />
          <Blob x={850} y={420} rx={50} ry={80} c="#a19e98" />
          <Blob x={1190} y={480} rx={110} ry={260} c="#656054" r={-20} o={0.85} />
          <Blob x={1140} y={700} rx={90} ry={120} c="#726d60" r={-30} />
          <Blob x={1400} y={520} rx={60} ry={260} c="#a3a8a1" r={-14} />
          <Blob x={1350} y={900} rx={80} ry={220} c="#8d918b" />
          <Blob x={1290} y={1300} rx={50} ry={200} c="#8b8e88" r={20} />
          <Blob x={200} y={2300} rx={90} ry={20} c="#868983" />
        </g>
        <path d={curve(silhouette, true)} fill="none" stroke="#b4b7a8" strokeWidth="20" filter="url(#soft)" />
        <g clipPath="url(#outerClip)">
          <rect x="0" y="400" width="1600" height="2100" fill="url(#outerFill)" />
          <g filter="url(#softer)">
            <Blob x={1450} y={1330} rx={50} ry={220} c="#9a9f98" r={20} />
            <Blob x={220} y={2450} rx={130} ry={26} c="#7d776a" />
          </g>
        </g>
      </g>

      <path d={between(rimOuter, rimInner)} fill="url(#beadFill)" stroke="#111" strokeWidth="2" />
      <path d={curve(rimInner) + "L75 1900L92 2005L105 2050" + curve([...visorTop].reverse(), false, false) + "Z"} fill="url(#ledgeFill)" stroke="#111" strokeWidth="2" />

      <g clipPath="url(#visorClip)">
        <rect x="0" y="300" width="1300" height="1900" fill="url(#visorFill)" />
        <g filter="url(#softer)">
          <Blob x={310} y={890} rx={170} ry={115} c="#605b50" />
          <Blob x={450} y={690} rx={130} ry={120} c="#7f7a6e" />
          <Blob x={760} y={540} rx={80} ry={90} c="#98938c" />
          <Blob x={800} y={850} rx={80} ry={260} c="#827d71" r={8} />
          <Blob x={330} y={1190} rx={190} ry={110} c="#9c9d9a" />
          <Blob x={890} y={1230} rx={65} ry={400} c="#a6a39d" r={2} />
          <Blob x={1120} y={1180} rx={130} ry={280} c="#808580" />
          <Blob x={1010} y={830} rx={60} ry={130} c="#7d7b70" o={0.8} />
          <Blob x={400} y={1540} rx={210} ry={120} c="#837f77" o={0.7} />
          <Blob x={500} y={1600} rx={90} ry={130} c="#878374" o={0.6} />
          <Blob x={220} y={1810} rx={80} ry={220} c="#989a93" o={0.6} />
          <Blob x={740} y={1800} rx={160} ry={160} c="#757670" o={0.8} />
          <Blob x={560} y={2020} rx={240} ry={60} c="#6c6f69" o={0.8} />
          <Blob x={605} y={900} rx={90} ry={260} c="#aba79f" r={8} />
        </g>
        <path d={curve([[110, 2000], [85, 1820], [75, 1600], [70, 1400], [80, 1200]])} fill="none" stroke="#74776d" strokeWidth="34" opacity="0.6" filter="url(#glow)" />
        <path d={curve(visorLeft)} fill="none" stroke="url(#edgeFill)" strokeWidth="30" filter="url(#soft)" />
        <path d={curve(visorLeft.slice(6))} fill="none" stroke="#aba08f" strokeWidth="80" opacity="0.6" filter="url(#glow)" />
        <g transform="rotate(8 604 900)">
          <ellipse cx="608" cy="905" rx="58" ry="190" fill="#e6e4e0" filter="url(#glow)" />
          <ellipse cx="606" cy="895" rx="44" ry="145" fill="#fff" filter="url(#glow)" />
          <ellipse cx="604" cy="890" rx="32" ry="95" fill="#fff" filter="url(#soft)" />
        </g>
      </g>

      <g fill="none" stroke="#0c0c0c" strokeWidth="2.4">
        <path d={curve(visorTop)} />
        <path d={curve(rimInner)} strokeWidth="3" />
        <path d={curve([[105, 2050], [150, 2100], [200, 2127], [270, 2132], [380, 2110], [485, 2082]])} />
        <path d={curve(seam)} strokeWidth="6" />
        <path d={curve(seam.slice(5))} stroke="#8c8b84" strokeWidth="2" />
        <path d={curve([[875, 507], [905, 420], [960, 335], [1040, 268], [1125, 242], [1180, 240], [1256, 262]])} />
        <path d={curve([[1125, 242], [1250, 400], [1350, 560], [1420, 700], [1457, 810], [1480, 885], [1493, 945]])} />
        <path d={curve([[891, 570], [856, 725], [822, 880], [777, 1085], [735, 1290], [690, 1530], [660, 1750], [637, 1970]])} />
        <path d="M907 545L891 570M637 1970L643 1993" />
        <path d={curve([[855, 1800], [882, 1872], [920, 1960], [955, 2035]])} />
        <path d="M1240 1005L1285 998M1243 1013L1272 1008M1245 1148H1272L1286 1158M485 2082V2128M218 2145L165 2258V2278M92 2007L55 2040M58 1892L72 1886M875 507L880 485" />
        <path d={curve(silhouette.slice(24, 46))} strokeDasharray="6 3" />
      </g>
    </g>
  </svg>
);

const ViewCube = () => (
  <svg width="120" height="118" viewBox="1795 92 120 118" fontFamily={sans} fontWeight="700">
    <defs>
      <linearGradient id="faceL" x1="0" y1="0" x2="0" y2="1"><stop offset="0" stopColor="#ececec" /><stop offset="1" stopColor="#b9b9b9" /></linearGradient>
      <radialGradient id="ground"><stop offset="0" stopColor="#666" /><stop offset="0.6" stopColor="#aaa" /><stop offset="1" stopColor="#fff" stopOpacity="0" /></radialGradient>
    </defs>
    <path d="M1802.5 107.5L1811.5 97.5L1820.5 107.5M1804.5 106V114.5H1818.5V106" fill="none" stroke="#888" />
    <path d="M1810 107H1813V114H1810Z" fill="#666" />
    <ellipse cx="1857" cy="180" rx="38" ry="6" fill="url(#ground)" />
    <path d="M1816 178L1830 176" stroke="#00f" strokeWidth="1.5" />
    <path d="M1897 178L1880 176" stroke="#f00" strokeWidth="1.5" />
    <path d="M1823.5 129L1856.5 125.5L1889.5 129V176L1856.5 179.5L1823.5 176Z" fill="url(#faceL)" stroke="#777" />
    <rect x="1850" y="135" width="13" height="35" fill="#a8b0bd" />
    <path d="M1856.5 125.5V179.5" stroke="#666" />
    <g fill="#3f4653" fontSize="8" textAnchor="middle">
      <text x="1839" y="156">FRONT</text>
      <text x="1874" y="156">RIGHT</text>
    </g>
    <g fontSize="12" fontWeight="400" strokeWidth="0.5" textAnchor="middle">
      <text x="1856.5" y="124" fill="#2bf02b" stroke="#2bf02b">Y</text>
      <text x="1810.5" y="182" fill="#00f" stroke="#00f">Z</text>
      <text x="1902.5" y="182" fill="#f00" stroke="#f00">X</text>
    </g>
    <path d="M1896 192.5H1909M1896.5 196.5H1908.5L1902.5 203.5Z" fill="none" stroke="#888" />
  </svg>
);

/* ---------- thumbnails ---------- */

const HelmetThumb = ({ id, detailed }: { id: string; detailed?: boolean }) => (
  <svg width="168" height="142" viewBox="51 561 504 426">
    <defs>
      <radialGradient id={id} gradientUnits="userSpaceOnUse" cx="290" cy="762" r="190">
        <stop offset="0" stopColor="#cfc5b6" /><stop offset="0.1" stopColor="#a59a88" /><stop offset="0.2" stopColor="#8a8171" />
        <stop offset="0.36" stopColor="#6c675a" /><stop offset="0.55" stopColor="#6b6c66" /><stop offset="0.8" stopColor="#55544e" /><stop offset="1" stopColor="#7c776a" />
      </radialGradient>
      <filter id={id + "b"} x="-80%" y="-80%" width="260%" height="260%"><feGaussianBlur stdDeviation="11" /></filter>
      <filter id={id + "s"} x="-80%" y="-80%" width="260%" height="260%"><feGaussianBlur stdDeviation="4" /></filter>
      <clipPath id={id + "c"}>
        <path d={curve([[197, 735], [240, 690], [300, 664], [350, 660], [400, 675], [430, 710], [434, 745], [425, 790], [422, 825], [395, 880], [350, 930], [300, 965], [240, 983], [205, 972], [185, 935], [181, 890], [182, 830], [188, 780], [203, 742]], true)} />
      </clipPath>
    </defs>
    <ellipse cx="355" cy="945" rx="78" ry="66" fill="#ccc" />
    <path d="M180 990V950L300 930L360 990Z" fill="#ccc" />
    <g clipPath={`url(#${id}c)`}>
      <rect x="170" y="640" width="280" height="360" fill={`url(#${id})`} />
      <g filter={`url(#${id}b)`}>
        <Blob x={235} y={825} rx={30} ry={30} c="#878c87" />
        <Blob x={240} y={910} rx={55} ry={45} c="#4f4e48" />
        <Blob x={345} y={880} rx={25} ry={40} c="#5a5a53" />
        <Blob x={345} y={700} rx={24} ry={30} c="#655f53" />
        <Blob x={400} y={765} rx={26} ry={40} c="#858883" />
        <Blob x={385} y={675} rx={35} ry={16} c="#a5a393" />
        <Blob x={182} y={860} rx={8} ry={80} c="#9b9585" />
        <Blob x={230} y={972} rx={40} ry={8} c="#877f70" />
      </g>
      <circle cx="290" cy="764" r="13" fill="#fff" filter={`url(#${id}s)`} />
      <circle cx="290" cy="764" r="6" fill="#fff" filter={`url(#${id}s)`} />
    </g>
    <g fill="none" stroke="#111" strokeWidth="2.5">
      <path d="M197 735L318 803L383 840" strokeWidth={detailed ? 5 : 2.5} />
      <path d={curve([[300, 664], [345, 685], [382, 720], [345, 752], [318, 803], [300, 860], [282, 950]])} />
      <path d="M382 720L432 726M360 748L418 797" />
      <path d={curve([[383, 840], [378, 865], [345, 900], [300, 938], [250, 960], [205, 958], [184, 920]])} />
      {detailed && <path strokeWidth="4" d={curve([[345, 662], [390, 683], [415, 725], [418, 790], [392, 860], [340, 925], [280, 962], [220, 976], [190, 955]])} />}
      {!detailed && <path d="M320 793L405 850M313 938L325 948" />}
    </g>
    <path fill="none" stroke="#222" strokeWidth="1.5" strokeDasharray="4 4" d={curve([[197, 735], [240, 690], [300, 664], [350, 660], [400, 675], [430, 710], [434, 745], [425, 790], [422, 825], [395, 880], [350, 930], [300, 965], [240, 983]])} />
  </svg>
);

const Screw = ({ x, y, r = 9 }: { x: number; y: number; r?: number }) => (
  <g>
    <circle cx={x} cy={y} r={r} fill="#6a6a64" stroke="#111" strokeWidth="3" />
    <path d={`M${x - r / 2} ${y}H${x + r / 2}M${x} ${y - r / 2}V${y + r / 2}`} stroke="#111" strokeWidth="3" />
  </g>
);

const WalleThumb = () => (
  <svg width="168" height="142" viewBox="51 51 504 426">
    <path d="M105 382L125 372L200 412L370 395L395 392L398 400L385 425L395 435L300 480H270Z" fill="#bdbdbb" />
    <path d="M212 190L266 163L275 182L240 205Z" fill="#b5b2a6" stroke="#333" strokeWidth="1.5" />
    <path d="M230 207L290 180C345 182 375 240 374 310L340 340Z" fill="#b1ada1" stroke="#222" strokeWidth="3" />
    <path d="M321 240L390 205L398 222L330 262Z" fill="#69665b" stroke="#222" strokeWidth="2" />
    <path d="M365 350L395 340M370 355L392 350" stroke="#333" strokeWidth="5" />
    <path d="M109 200C106 172 122 155 150 162L300 240C350 275 380 345 380 415C375 465 350 478 318 478C280 475 245 455 205 400C150 335 115 270 109 200Z" fill="#23221f" stroke="#111" strokeWidth="5" />
    <path d="M122 205C122 182 132 174 148 182L292 252C335 285 362 350 362 415C358 455 340 465 312 465C282 462 250 440 215 395C165 335 128 270 122 205Z" fill="#96968e" />
    <ellipse cx="221" cy="312" rx="62" ry="90" fill="#b9b7ab" stroke="#333" strokeWidth="2.5" transform="rotate(-22 221 312)" />
    <ellipse cx="222" cy="312" rx="54" ry="82" fill="none" stroke="#444" strokeWidth="2" transform="rotate(-22 222 312)" />
    <path d="M183 240C176 290 215 370 270 382C282 360 285 335 272 300C255 262 215 235 183 240Z" fill="#a9a599" />
    <path d="M183 240C176 290 215 370 270 382" fill="none" stroke="#222" strokeWidth="5" />
    <path d="M190 245C186 290 220 362 268 374" fill="none" stroke="#555" strokeWidth="2" />
    <Screw x={138} y={202} /><Screw x={315} y={308} /><Screw x={309} y={439} r={7} />
  </svg>
);

const WalleBoxThumb = () => (
  <svg width="168" height="142" viewBox="591 51 504 426">
    <defs>
      <linearGradient id="boxSide" x1="0" y1="0" x2="0" y2="1"><stop offset="0" stopColor="#b3afa3" /><stop offset="0.6" stopColor="#a09d94" /><stop offset="1" stopColor="#88867e" /></linearGradient>
    </defs>
    <path d="M634 394L680 368L700 430L890 477H960L1050 430L1000 405Z" fill="#bdbdbb" />
    <path d="M640 180L820 79L965 162L1010 200C1040 240 1055 300 1053 355Q1052 385 1035 392L880 477L800 400Z" fill="url(#boxSide)" stroke="#333" strokeWidth="2" />
    <path d="M640 180L820 79L965 162L800 258Z" fill="#b4b0a4" stroke="#222" strokeWidth="2.5" />
    <path d="M636 182L650 174L800 256C850 290 885 370 884 440L870 480H780C700 420 650 340 636 270Z" fill="#1f1e1b" stroke="#111" strokeWidth="4" />
    <path d="M650 195L795 268C840 300 868 370 868 440L855 477H800C715 420 665 340 650 268Z" fill="#93938b" />
    <ellipse cx="748" cy="337" rx="56" ry="85" fill="#23221f" stroke="#111" strokeWidth="4" transform="rotate(-22 748 337)" />
    <ellipse cx="757" cy="331" rx="39" ry="68" fill="#b1ada0" stroke="#555" strokeWidth="3" transform="rotate(-22 757 331)" />
    <ellipse cx="761" cy="330" rx="35" ry="64" fill="#aeaa9d" stroke="#222" strokeWidth="2" transform="rotate(-22 761 330)" />
    <Screw x={665} y={218} /><Screw x={837} y={336} r={7} /><Screw x={828} y={455} r={6} />
  </svg>
);

/* ---------- data ---------- */

const files = [
  { name: "helmet", version: "V4", selected: true, tint: "#fff", art: <HelmetThumb id="th1" detailed /> },
  { name: "test", version: "V1", tint: "#fff", art: <HelmetThumb id="th2" /> },
  { name: "wall-e", version: "V32", tint: "#ececec", art: <WalleThumb /> },
  { name: "wall-e v31", version: "V8", tint: "#ececec", art: <WalleBoxThumb /> },
];

const groups = [
  { label: "SKETCH", width: 136, icons: ["newSketch", "line", "rect"] },
  { label: "CREATE", width: 69, icons: ["patch"] },
  { label: "MODIFY", width: 69, icons: ["stitch"] },
  { label: "ASSEMBLE", width: 92, icons: ["component", "joint"] },
  { label: "CONSTRUCT", width: 94, icons: ["plane"] },
  { label: "INSPECT", width: 74, icons: ["measure"] },
  { label: "INSERT", width: 64, icons: ["picture"] },
  { label: "MAKE", width: 59, icons: ["printer"] },
  { label: "ADD-INS", width: 74, icons: ["script"] },
  { label: "SELECT", width: 70, icons: ["select"] },
];

interface TreeNode {
  text: string;
  level: number;
  icon: React.ReactNode;
  bulb?: "on" | "off";
  toggle?: "open" | "closed";
}

const nodes: TreeNode[] = [
  { text: "Document Settings", level: 1, icon: <Gear color="#555" hole="#f1f1f1" />, toggle: "closed" },
  { text: "Named Views", level: 1, icon: <Folder />, toggle: "closed" },
  { text: "Origin", level: 1, icon: <Folder />, toggle: "closed", bulb: "off" },
  { text: "Bodies", level: 1, icon: <Folder />, toggle: "open", bulb: "on" },
  { text: "MeshBody1", level: 2, icon: <Mesh />, bulb: "off" },
  { text: "MeshBody2", level: 2, icon: <Mesh />, bulb: "off" },
  ...["Body1 (4)", "Body6 (6)", "Body10 (7)", "Body9 (21)", "Body11 (9)", "Body12 (13)"].map(
    (text): TreeNode => ({ text, level: 2, icon: <Surface />, bulb: "on" })
  ),
  { text: "Sketches", level: 1, icon: <Folder />, toggle: "open", bulb: "on" },
  { text: "Sketch1", level: 2, icon: <SketchIcon />, bulb: "off" },
  { text: "Sketch2", level: 2, icon: <SketchIcon />, bulb: "off" },
  { text: "Sketch3", level: 2, icon: <SketchIcon pinned />, bulb: "off" },
];

const featureKinds: Record<string, React.ReactNode> = {
  mesh: <Mesh />, form: <Mesh purple />, split: <BoxSplit />, move: <MoveIcon />, sketch: <SketchIcon />, patch: <PatchBlob />, turn: <PatchTurn />,
};
const features = "mesh mesh form split move split move split split split split move sketch patch turn move patch sketch move patch".split(" ");

const playback: [string, string][] = [
  ["To start", "M1 0V14M13 1V13L3 7Z"],
  ["Step back", "M12 4V10M10 1V13L0 7Z"],
  ["Play", "M1 0V14L13 7Z"],
  ["Step forward", "M1 4V10M3 1V13L13 7Z"],
  ["To end", "M12 0V14M0 1V13L10 7Z"],
];

/* ---------- sections ---------- */

const DataPanel = () => (
  <Panel>
    <PanelBody>
      <PanelHeader>
        <button aria-label="Back">
          <svg width="10" height="14" viewBox="0 0 10 14"><path d="M8.5 1L2.5 7L8.5 13" fill="none" stroke="#666" strokeWidth="3" /></svg>
        </button>
        <ProjectBadge><ProjectIcon /></ProjectBadge>
        <ProjectTitle>My First Project</ProjectTitle>
        <HeaderButton aria-label="Refresh">
          <svg width="16" height="16" viewBox="0 0 16 16" fill="none" stroke="#666" strokeWidth="2.2">
            <path d="M1.5 6.5C3 1.5 9.5 0.5 13 4.5M14.5 9.5C13 14.5 6.5 15.5 3 11.5" />
            <path d="M16 0.5V7H9.5ZM0 15.5V9H6.5Z" fill="#666" stroke="none" />
          </svg>
        </HeaderButton>
        <HeaderButton aria-label="Search">
          <svg width="15" height="15" viewBox="0 0 15 15" fill="none" stroke="#666">
            <circle cx="5.5" cy="5.5" r="4.5" strokeWidth="1.8" /><path d="M8.8 8.8L14 14" strokeWidth="2.6" />
          </svg>
        </HeaderButton>
      </PanelHeader>
      <TabSwitch>
        <SwitchTab $active>Data</SwitchTab>
        <SwitchTab>People</SwitchTab>
      </TabSwitch>
      <Actions>
        <SplitButton>
          <SplitPart $width={39} aria-label="History">
            <svg width="20" height="16" viewBox="0 0 20 16" fill="none" stroke="#666">
              <path d="M3.2 6.5C5 -2 18 -2 18.8 7.5C18.8 17 5.500 18 3.5 10" strokeWidth="1.1" />
              <path d="M0.5 6.5H5.500L3.2 10Z" fill="#e6e6e6" />
              <circle cx="11" cy="8" r="4.8" fill="#666" stroke="none" />
              <path d="M11 4.5V8.5H14" stroke="#e6e6e6" strokeWidth="1.6" />
            </svg>
          </SplitPart>
          <SplitPart $width={26} aria-label="More history">
            <svg width="14" height="10" viewBox="0 0 14 10"><path d="M1 1.5L7 7.5L13 1.5" fill="none" stroke="#666" strokeWidth="3" /></svg>
          </SplitPart>
        </SplitButton>
        <PanelButton $primary>Upload</PanelButton>
        <PanelButton>New Folder</PanelButton>
        <SettingsButton aria-label="Settings"><Gear /></SettingsButton>
      </Actions>
      <Breadcrumb>
        <ProjectIcon size={16} color="#666" />
        <svg width="10" height="14" viewBox="0 0 10 14"><path d="M1.5 1L7.5 7L1.5 13" fill="none" stroke="#ccc" strokeWidth="2.5" /></svg>
        <Ring />
        <span>master</span>
      </Breadcrumb>
      <CardGrid>
        {files.map((f) => (
          <Card key={f.name} $selected={f.selected}>
            <Thumb $tint={f.tint}>{f.art}</Thumb>
            <CardFooter>
              <Cube />
              <CardName>{f.name}</CardName>
              <Version>{f.version}</Version>
            </CardFooter>
          </Card>
        ))}
      </CardGrid>
    </PanelBody>
    <PanelClose aria-label="Close panel"><Cross /></PanelClose>
  </Panel>
);

const QuickAccess = () => (
  <QuickBar>
    <QuickButton $gap={25} aria-label="Data panel">
      <svg width="17" height="17" viewBox="0 0 17 17" fill="#444">
        {[0, 6, 12].map((y) => [0, 6, 12].map((x) => <rect key={`${x}-${y}`} x={x} y={y} width="5" height="5" />))}
      </svg>
    </QuickButton>
    <QuickButton $gap={25} aria-label="File">
      <svg width="13" height="16" viewBox="0 0 13 16" fill="#444"><path d="M0 0H7V6H13V16H0Z" /><path d="M8.5 0L13 4.5H8.5Z" /></svg>
      <Caret />
    </QuickButton>
    <QuickButton $gap={25} aria-label="Save">
      <svg width="16" height="16" viewBox="0 0 16 16"><path d="M0 0H16V16H1.5L0 14.5Z" fill="#888" /><path d="M3 1.5H13V7H3ZM4 11H12V15H4Z" fill="#eee" /><path d="M5 12H7V15H5Z" fill="#888" /></svg>
    </QuickButton>
    <QuickButton $gap={15} aria-label="Undo">
      <svg width="17" height="12" viewBox="0 0 17 12" fill="#4d4d4d"><path d="M0 5L6.5 0V3.2C12.5 3.2 16.5 6 16 12C14.5 8.5 12 7 6.5 7V10Z" /></svg>
      <Caret />
    </QuickButton>
    <QuickButton aria-label="Redo">
      <svg width="17" height="12" viewBox="0 0 17 12" fill="#999"><path d="M17 5L10.5 0V3.2C4.5 3.2 0.5 6 1 12C2.5 8.5 5 7 10.5 7V10Z" /></svg>
      <Caret faded />
    </QuickButton>
    <Spacer />
    <QuickButton $gap={25} aria-label="Comments">
      <svg width="16" height="16" viewBox="0 0 16 16"><path d="M0 1H16V11H14V15L10 11H0Z" fill="#4d4d4d" /><path d="M2 3.5H14M2 6H14M2 8.5H11" stroke="#f1f1f1" strokeWidth="1.2" /></svg>
    </QuickButton>
    <QuickButton $gap={28} aria-label="Job status">
      <svg width="16" height="16" viewBox="0 0 16 16" fill="none" stroke="#4d4d4d"><circle cx="8" cy="8" r="7" strokeWidth="2" /><path d="M8 3.5V8.5H11.5" strokeWidth="1.8" /></svg>
    </QuickButton>
    <QuickButton $gap={22}>Joe Mckirdy<Caret /></QuickButton>
    <QuickButton aria-label="Help">
      <svg width="16" height="16" viewBox="0 0 16 16"><circle cx="8" cy="8" r="8" fill="#666" /><path d="M5.5 6C5.5 2.8 10.5 2.8 10.5 5.8C10.5 7.5 8 7.5 8 9.5M8 11V13" fill="none" stroke="#fff" strokeWidth="2" /></svg>
      <Caret />
    </QuickButton>
  </QuickBar>
);

const BrowserTree = () => (
  <Tree>
    <TreeRow $level={0}>
      <TreeToggle aria-label="Collapse"><Expander open /></TreeToggle>
      <NodeChip>
        <BulbSlot $root aria-label="Visibility"><Bulb on /></BulbSlot>
        <RootName><DocCube /><NodeText>helmet v4</NodeText></RootName>
        <svg width="14" height="14" viewBox="0 0 14 14"><circle cx="7" cy="7" r="6.2" fill="#fff" stroke="#333" /><circle cx="7" cy="7" r="2.4" fill="#222" /></svg>
      </NodeChip>
    </TreeRow>
    {nodes.map((n) => (
      <TreeRow key={n.text} $level={n.level}>
        <TreeToggle aria-label={n.text}>{n.toggle && <Expander open={n.toggle === "open"} />}</TreeToggle>
        <NodeChip>
          {n.bulb && <BulbSlot aria-label="Visibility"><Bulb on={n.bulb === "on"} /></BulbSlot>}
          {n.icon}
          <NodeText>{n.text}</NodeText>
        </NodeChip>
      </TreeRow>
    ))}
  </Tree>
);

export default function App() {
  return (
    <Window>
      <GlobalStyle />
      <TitleBar>
        <svg width="15" height="16" viewBox="0 0 15 16">
          <rect width="15" height="15" y="0.5" fill="#fbe3cd" />
          <path d="M3.5 1.5H13V4.5H7V7H11.5V9.5H7V14H3.5Z" fill="#c8651b" />
          <path d="M3.5 1.5L5.5 4V14H3.5Z" fill="#8f4212" />
          <path d="M9 12H13V15H9Z" fill="#f0a55e" />
        </svg>
        <TitleText>Autodesk Fusion 360 (Startup License)</TitleText>
        <WindowButton aria-label="Minimize"><svg width="10" height="10" viewBox="0 0 10 10"><path d="M0 4.5H10" stroke="#000" /></svg></WindowButton>
        <WindowButton aria-label="Restore"><svg width="10" height="10" viewBox="0 0 10 10" fill="none" stroke="#000"><path d="M0.5 2.5H7.5V9.5H0.5ZM2.5 2.5V0.5H9.5V7.5H7.5" /></svg></WindowButton>
        <WindowButton aria-label="Close"><Cross color="#000" width={1} /></WindowButton>
      </TitleBar>
      <Main>
        <DataPanel />
        <Workspace>
          <TabBar>
            <DocumentTab>
              <Cube />
              <DocumentName>helmet v4</DocumentName>
              <SyncMark><Ring size={10} color="#7fd0bf" width={1} /></SyncMark>
              <button aria-label="Close document"><Cross size={9} /></button>
            </DocumentTab>
            <NewTab aria-label="New document">
              <svg width="12" height="12" viewBox="0 0 12 12"><path d="M6 0V12M0 6H12" stroke="#8d8f92" strokeWidth="2" /></svg>
            </NewTab>
          </TabBar>
          <QuickAccess />
          <Viewport>
            <ModelLayer><HelmetModel /></ModelLayer>
            <Ribbon>
              <WorkspacePicker><Grip /><MenuText $space={5}>PATCH</MenuText><Caret /></WorkspacePicker>
              {groups.map((g) => (
                <RibbonGroup key={g.label} $width={g.width}>
                  <RibbonIcons>
                    {g.icons.map((i) => (
                      <RibbonTool key={i} $active={i === "select"} aria-label={i}>{ribbonIcons[i]}</RibbonTool>
                    ))}
                  </RibbonIcons>
                  <MenuLabel>{g.label}<Caret /></MenuLabel>
                </RibbonGroup>
              ))}
            </Ribbon>
            <BrowserBar>
              <CollapseButton aria-label="Collapse browser">
                <svg width="10" height="7" viewBox="0 0 10 7"><path d="M5 0V7L0 3.5ZM10 0V7L5 3.5Z" fill="#333" /></svg>
              </CollapseButton>
              <PaletteTitle>BROWSER</PaletteTitle>
              <button aria-label="Minimize browser"><RoundSign /></button>
              <PaletteEdge />
            </BrowserBar>
            <BrowserTree />
            <ViewportBottom>
              <CommentsBar $indent>
                <PaletteTitle>COMMENTS</PaletteTitle>
                <button aria-label="Expand comments"><RoundSign plus /></button>
                <PaletteEdge />
              </CommentsBar>
              <NavBar>
                <NavTool $gap={6} $inner={5} aria-label="Orbit">{navIcons.orbit}<Caret /></NavTool>
                <NavTool $gap={10} aria-label="Look at">{navIcons.look}</NavTool>
                <NavTool $gap={10} aria-label="Pan">{navIcons.hand}</NavTool>
                <NavTool $gap={10} aria-label="Zoom">{navIcons.zoom}</NavTool>
                <NavTool $gap={14} $inner={5} aria-label="Fit">{navIcons.zoomWindow}<Caret /></NavTool>
                <NavTool $gap={7} aria-label="Display settings">{navIcons.display}<Caret /></NavTool>
                <NavTool $gap={7} aria-label="Grid and snaps">{navIcons.grid}<Caret /></NavTool>
                <NavTool $gap={0} aria-label="Viewports">{navIcons.panes}<Caret /></NavTool>
              </NavBar>
            </ViewportBottom>
            <CubeLayer><ViewCube /></CubeLayer>
          </Viewport>
          <Timeline>
            <Playback>
              {playback.map(([name, d]) => (
                <button key={name} aria-label={name}>
                  <svg width="12" height="14" viewBox="0 0 13 14"><path d={d} fill="#4d4d4d" stroke="#4d4d4d" strokeWidth="1.2" /></svg>
                </button>
              ))}
            </Playback>
            <Features>
              {features.map((f, i) => (
                <Feature key={i}>
                  <FeatureButton aria-label={f}>{featureKinds[f]}</FeatureButton>
                  <TickRow><TickLeft /><TickRight /></TickRow>
                </Feature>
              ))}
            </Features>
            <TimelineEnd>
              <svg width="12" height="32" viewBox="0 0 12 32"><path d="M0 0H12V5L7 10V32H5V10L0 5Z" fill="#666" /></svg>
            </TimelineEnd>
            <TimelineSettings aria-label="Timeline settings"><Gear color="#444" hole="#f1f1f1" /></TimelineSettings>
          </Timeline>
        </Workspace>
      </Main>
      <Taskbar />
    </Window>
  );
}
